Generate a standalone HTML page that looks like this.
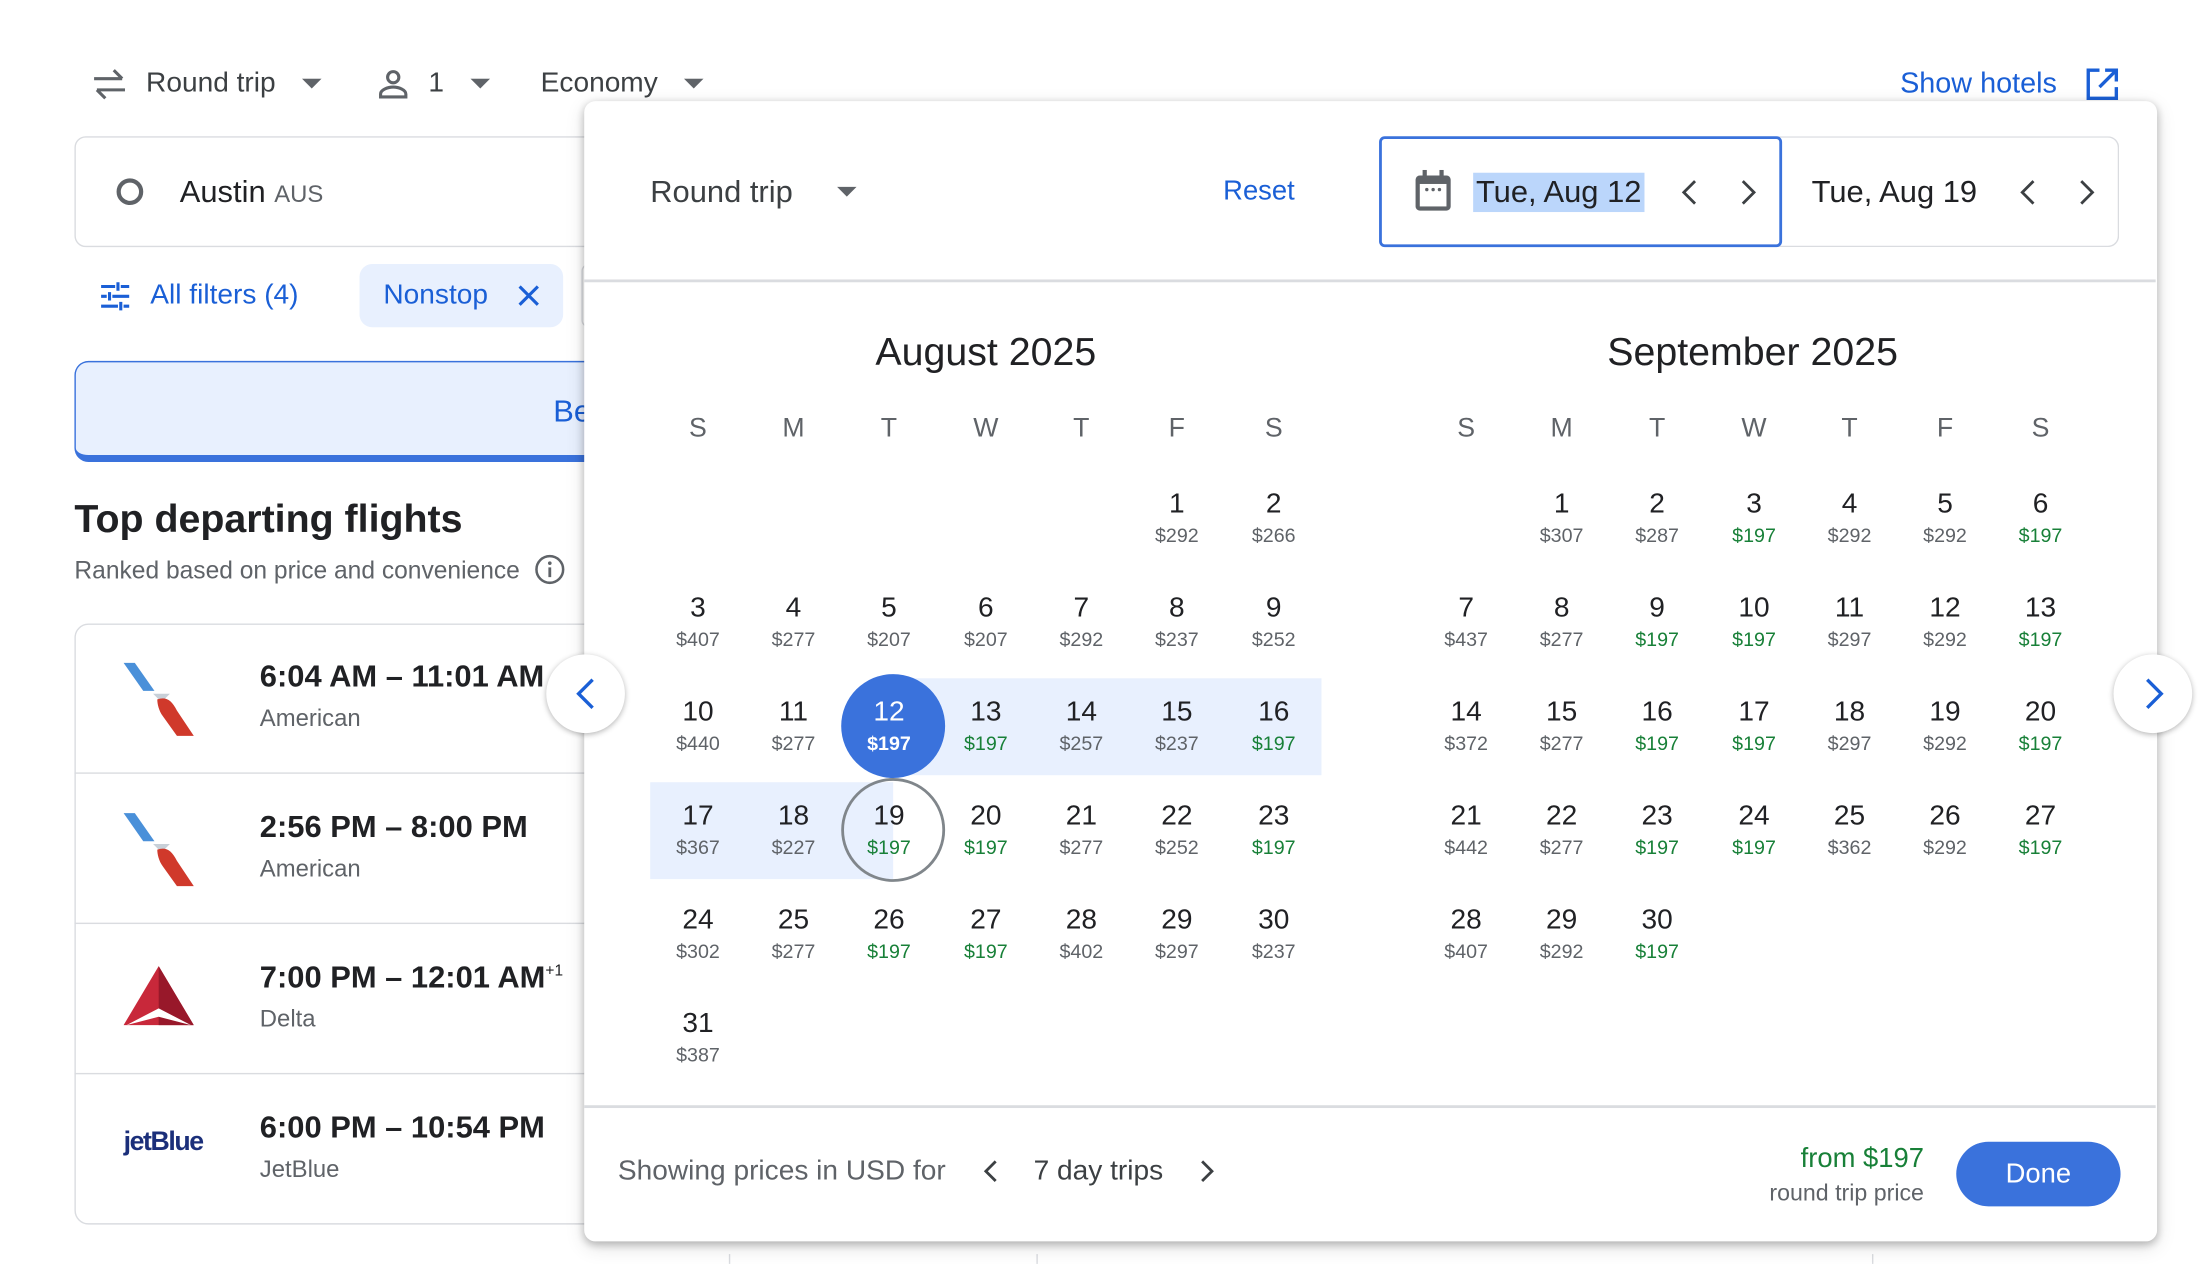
<!DOCTYPE html>
<html><head><meta charset="utf-8"><style>
*{box-sizing:border-box;margin:0;padding:0}
html,body{width:2202px;height:1264px;overflow:hidden;background:#fff}
#w{position:absolute;left:0;top:0;width:1568px;height:900px;transform:scale(1.40434);transform-origin:0 0;font-family:"Liberation Sans",Arial,sans-serif;color:#202124}
.a{position:absolute;white-space:nowrap}
.g{color:#5f6368}
.bl{color:#1a5fd6}
.d{position:absolute;width:64px;margin-left:-32px;text-align:center}
.d b{display:block;font-weight:400;font-size:20px;line-height:24px;color:#202124}
.d i{display:block;font-style:normal;font-size:14px;line-height:18px;margin-top:1px;color:#5f6368}
.d.gr i{color:#188038}
.wd{position:absolute;width:40px;margin-left:-20px;text-align:center;font-size:19px;color:#5f6368;top:295px}
.row{position:absolute;left:53px;width:380px;height:107px;border-bottom:1.5px solid #dadce0}
.tm{position:absolute;left:132px;top:25px;font-size:22px;font-weight:700;color:#202124}
.al{position:absolute;left:132px;top:58px;font-size:17px;color:#5f6368}
</style></head><body><div id="w">

<svg class="a" style="left:64px;top:48px" width="28" height="24" viewBox="0 0 28 24"><path d="M3 8h20M17 2l6 6M25 16H5M11 22l-6-6" stroke="#5f6368" stroke-width="2.2" fill="none"/></svg>
<div class="a" style="left:104px;top:48px;font-size:20px;color:#3c4043">Round trip</div>
<svg class="a" style="left:215px;top:56px" width="14" height="8"><path d="M0 0h14L7 7z" fill="#5f6368"/></svg>
<svg class="a" style="left:268px;top:48px" width="24" height="24" viewBox="0 0 24 24"><circle cx="12" cy="7" r="4" stroke="#5f6368" stroke-width="2.2" fill="none"/><path d="M3 21v-2c0-3 5-5 9-5s9 2 9 5v2z" stroke="#5f6368" stroke-width="2.2" fill="none"/></svg>
<div class="a" style="left:305px;top:48px;font-size:20px;color:#3c4043">1</div>
<svg class="a" style="left:335px;top:56px" width="14" height="8"><path d="M0 0h14L7 7z" fill="#5f6368"/></svg>
<div class="a" style="left:385px;top:48px;font-size:20px;color:#3c4043">Economy</div>
<svg class="a" style="left:487px;top:56px" width="14" height="8"><path d="M0 0h14L7 7z" fill="#5f6368"/></svg>
<div class="a bl" style="left:1353px;top:48px;font-size:20.5px">Show hotels</div>
<svg class="a" style="left:1484px;top:47px" width="26" height="26" viewBox="0 0 26 26"><path d="M11 3H3v20h20v-8M15 3h8v8M23 3L11 15" stroke="#1a5fd6" stroke-width="2.4" fill="none"/></svg>

<div class="a" style="left:53px;top:97px;width:420px;height:79px;border:1.5px solid #dadce0;border-radius:8px"></div>
<div class="a" style="left:83px;top:127px;width:19px;height:19px;border:3.5px solid #5f6368;border-radius:50%"></div>
<div class="a" style="left:128px;top:124px;font-size:22px;color:#202124">Austin <span style="font-size:17px;color:#5f6368">AUS</span></div>
<svg class="a" style="left:71px;top:200px" width="22" height="22" viewBox="0 0 22 22"><path d="M1 4h10M15 4h6M1 11h4M9 11h12M1 18h12M17 18h4M13 1v6M7 8v6M15 15v6" stroke="#1a5fd6" stroke-width="2.2" fill="none"/></svg>
<div class="a bl" style="left:107px;top:199px;font-size:20px">All filters (4)</div>
<div class="a" style="left:256px;top:188px;width:145px;height:45px;background:#e8f0fe;border-radius:9px"></div>
<div class="a bl" style="left:273px;top:199px;font-size:20px">Nonstop</div>
<svg class="a" style="left:368px;top:202px" width="17" height="17"><path d="M2 2l13 13M15 2L2 15" stroke="#1a5fd6" stroke-width="2.2"/></svg>
<div class="a" style="left:414px;top:188px;width:10px;height:45px;border:1.5px solid #dadce0;border-radius:9px"></div>
<div class="a" style="left:53px;top:257px;width:420px;height:72px;background:#e8f0fe;border:1.5px solid #3a72dc;border-bottom:5px solid #3a72dc;border-radius:10px"></div>
<div class="a bl" style="left:394px;top:280px;font-size:22px">Be</div>
<div class="a" style="left:53px;top:354px;font-size:28px;font-weight:700;color:#202124">Top departing flights</div>
<div class="a g" style="left:53px;top:396px;font-size:17.5px">Ranked based on price and convenience</div>
<svg class="a" style="left:380px;top:394px" width="23" height="23"><circle cx="11.5" cy="11.5" r="9.5" stroke="#5f6368" stroke-width="1.8" fill="none"/><path d="M11.5 10v7" stroke="#5f6368" stroke-width="2"/><circle cx="11.5" cy="7" r="1.3" fill="#5f6368"/></svg>

<div class="a" style="left:53px;top:444px;width:400px;height:428px;border:1.5px solid #dadce0;border-radius:10px"></div>
<div class="row" style="top:444px"><svg class="a" style="left:35px;top:26px" width="52" height="56" viewBox="0 0 52 56"><path d="M0 2h8l14 20h-8z" fill="#4a90d9"/><path d="M21 24h12l-6 6z" fill="#c8d0d8"/><path d="M24 28c6-2 10 0 14 8l12 18H38L28 40c-3-4-4-9-4-12z" fill="#d0392b"/></svg><div class="tm">6:04 AM – 11:01 AM</div><div class="al">American</div></div>
<div class="row" style="top:551px"><svg class="a" style="left:35px;top:26px" width="52" height="56" viewBox="0 0 52 56"><path d="M0 2h8l14 20h-8z" fill="#4a90d9"/><path d="M21 24h12l-6 6z" fill="#c8d0d8"/><path d="M24 28c6-2 10 0 14 8l12 18H38L28 40c-3-4-4-9-4-12z" fill="#d0392b"/></svg><div class="tm">2:56 PM – 8:00 PM</div><div class="al">American</div></div>
<div class="row" style="top:658px"><svg class="a" style="left:35px;top:30px" width="50" height="44" viewBox="0 0 50 44"><path d="M25 0L50 42H0z" fill="#c8283a"/><path d="M25 0L50 42H25z" fill="#98182a"/><path d="M2 42L25 30L48 42L25 36z" fill="#fff"/></svg><div class="tm">7:00 PM – 12:01 AM<sup style="font-size:11px;font-weight:400">+1</sup></div><div class="al">Delta</div></div>
<div class="row" style="top:765px;border-bottom:none"><div class="a" style="left:35px;top:38px;font-size:19px;color:#1b2f7a;letter-spacing:-1px;font-weight:700">jetBlue</div><div class="tm">6:00 PM – 10:54 PM</div><div class="al">JetBlue</div></div>

<div class="a" style="left:519px;top:893px;width:1px;height:7px;background:#dadce0"></div>
<div class="a" style="left:738px;top:893px;width:1px;height:7px;background:#dadce0"></div>
<div class="a" style="left:1333px;top:893px;width:1px;height:7px;background:#dadce0"></div>

<div class="a" style="left:416px;top:72px;width:1120px;height:812px;background:#fff;border-radius:8px;box-shadow:0 2px 6px rgba(0,0,0,.25),0 4px 14px rgba(0,0,0,.12)"></div>
<div class="a" style="left:463px;top:124px;font-size:22px;color:#3c4043">Round trip</div>
<svg class="a" style="left:596px;top:133px" width="14" height="8"><path d="M0 0h14L7 7z" fill="#5f6368"/></svg>
<div class="a bl" style="left:871px;top:125px;font-size:19.5px">Reset</div>
<div class="a" style="left:1266px;top:97px;width:243px;height:79px;border:1.5px solid #dadce0;border-left:none;border-radius:0 8px 8px 0"></div>
<div class="a" style="left:982px;top:97px;width:287px;height:79px;border:2.5px solid #3a72dc;border-radius:4px"></div>
<svg class="a" style="left:1007px;top:121px" width="28" height="30" viewBox="0 0 28 30"><rect x="1" y="4" width="25" height="25" rx="3" fill="#5f6368"/><rect x="4" y="10" width="19" height="16" fill="#fff"/><rect x="6" y="0" width="3" height="6" fill="#5f6368"/><rect x="18" y="0" width="3" height="6" fill="#5f6368"/><circle cx="9" cy="14" r="1.2" fill="#5f6368"/><circle cx="13.5" cy="14" r="1.2" fill="#5f6368"/><circle cx="18" cy="14" r="1.2" fill="#5f6368"/></svg>
<div class="a" style="left:1049px;top:123px;font-size:22px;color:#202124;background:#bbd6fb;padding:2px 2px;line-height:24px">Tue, Aug 12</div>
<svg class="a" style="left:1196px;top:127px" width="14" height="20"><path d="M11 2L3 10l8 8" stroke="#3c4043" stroke-width="2" fill="none"/></svg>
<svg class="a" style="left:1238px;top:127px" width="14" height="20"><path d="M3 2l8 8-8 8" stroke="#3c4043" stroke-width="2" fill="none"/></svg>
<div class="a" style="left:1290px;top:124px;font-size:22px;color:#202124">Tue, Aug 19</div>
<svg class="a" style="left:1437px;top:127px" width="14" height="20"><path d="M11 2L3 10l8 8" stroke="#3c4043" stroke-width="2" fill="none"/></svg>
<svg class="a" style="left:1479px;top:127px" width="14" height="20"><path d="M3 2l8 8-8 8" stroke="#3c4043" stroke-width="2" fill="none"/></svg>
<div class="a" style="left:416px;top:199px;width:1119px;height:1.5px;background:#dadce0"></div>

<div class="a" style="left:560px;top:235px;width:284px;text-align:center;font-size:28px;color:#202124">August 2025</div>
<div class="a" style="left:1106px;top:235px;width:284px;text-align:center;font-size:28px;color:#202124">September 2025</div>
<div class="wd" style="left:497px">S</div><div class="wd" style="left:565px">M</div><div class="wd" style="left:633px">T</div><div class="wd" style="left:702px">W</div><div class="wd" style="left:770px">T</div><div class="wd" style="left:838px">F</div><div class="wd" style="left:907px">S</div>
<div class="wd" style="left:1044px">S</div><div class="wd" style="left:1112px">M</div><div class="wd" style="left:1180px">T</div><div class="wd" style="left:1249px">W</div><div class="wd" style="left:1317px">T</div><div class="wd" style="left:1385px">F</div><div class="wd" style="left:1453px">S</div>

<div class="a" style="left:636px;top:483px;width:305px;height:69px;background:#e8f0fe"></div>
<div class="a" style="left:463px;top:557px;width:173px;height:69px;background:#e8f0fe"></div>
<div class="a" style="left:599px;top:480px;width:74px;height:74px;border-radius:50%;background:#3a72dc"></div>
<div class="a" style="left:599px;top:554px;width:74px;height:74px;border-radius:50%;border:2.5px solid #80868b"></div>

<div class="d" style="left:838px;top:347px"><b>1</b><i>$292</i></div>
<div class="d" style="left:907px;top:347px"><b>2</b><i>$266</i></div>
<div class="d" style="left:497px;top:421px"><b>3</b><i>$407</i></div>
<div class="d" style="left:565px;top:421px"><b>4</b><i>$277</i></div>
<div class="d" style="left:633px;top:421px"><b>5</b><i>$207</i></div>
<div class="d" style="left:702px;top:421px"><b>6</b><i>$207</i></div>
<div class="d" style="left:770px;top:421px"><b>7</b><i>$292</i></div>
<div class="d" style="left:838px;top:421px"><b>8</b><i>$237</i></div>
<div class="d" style="left:907px;top:421px"><b>9</b><i>$252</i></div>
<div class="d" style="left:497px;top:495px"><b>10</b><i>$440</i></div>
<div class="d" style="left:565px;top:495px"><b>11</b><i>$277</i></div>
<div class="d" style="left:633px;top:495px"><b style="color:#fff">12</b><i style="color:#fff;font-weight:700">$197</i></div>
<div class="d gr" style="left:702px;top:495px"><b>13</b><i>$197</i></div>
<div class="d" style="left:770px;top:495px"><b>14</b><i>$257</i></div>
<div class="d" style="left:838px;top:495px"><b>15</b><i>$237</i></div>
<div class="d gr" style="left:907px;top:495px"><b>16</b><i>$197</i></div>
<div class="d" style="left:497px;top:569px"><b>17</b><i>$367</i></div>
<div class="d" style="left:565px;top:569px"><b>18</b><i>$227</i></div>
<div class="d gr" style="left:633px;top:569px"><b>19</b><i>$197</i></div>
<div class="d gr" style="left:702px;top:569px"><b>20</b><i>$197</i></div>
<div class="d" style="left:770px;top:569px"><b>21</b><i>$277</i></div>
<div class="d" style="left:838px;top:569px"><b>22</b><i>$252</i></div>
<div class="d gr" style="left:907px;top:569px"><b>23</b><i>$197</i></div>
<div class="d" style="left:497px;top:643px"><b>24</b><i>$302</i></div>
<div class="d" style="left:565px;top:643px"><b>25</b><i>$277</i></div>
<div class="d gr" style="left:633px;top:643px"><b>26</b><i>$197</i></div>
<div class="d gr" style="left:702px;top:643px"><b>27</b><i>$197</i></div>
<div class="d" style="left:770px;top:643px"><b>28</b><i>$402</i></div>
<div class="d" style="left:838px;top:643px"><b>29</b><i>$297</i></div>
<div class="d" style="left:907px;top:643px"><b>30</b><i>$237</i></div>
<div class="d" style="left:497px;top:717px"><b>31</b><i>$387</i></div>

<div class="d" style="left:1112px;top:347px"><b>1</b><i>$307</i></div>
<div class="d" style="left:1180px;top:347px"><b>2</b><i>$287</i></div>
<div class="d gr" style="left:1249px;top:347px"><b>3</b><i>$197</i></div>
<div class="d" style="left:1317px;top:347px"><b>4</b><i>$292</i></div>
<div class="d" style="left:1385px;top:347px"><b>5</b><i>$292</i></div>
<div class="d gr" style="left:1453px;top:347px"><b>6</b><i>$197</i></div>
<div class="d" style="left:1044px;top:421px"><b>7</b><i>$437</i></div>
<div class="d" style="left:1112px;top:421px"><b>8</b><i>$277</i></div>
<div class="d gr" style="left:1180px;top:421px"><b>9</b><i>$197</i></div>
<div class="d gr" style="left:1249px;top:421px"><b>10</b><i>$197</i></div>
<div class="d" style="left:1317px;top:421px"><b>11</b><i>$297</i></div>
<div class="d" style="left:1385px;top:421px"><b>12</b><i>$292</i></div>
<div class="d gr" style="left:1453px;top:421px"><b>13</b><i>$197</i></div>
<div class="d" style="left:1044px;top:495px"><b>14</b><i>$372</i></div>
<div class="d" style="left:1112px;top:495px"><b>15</b><i>$277</i></div>
<div class="d gr" style="left:1180px;top:495px"><b>16</b><i>$197</i></div>
<div class="d gr" style="left:1249px;top:495px"><b>17</b><i>$197</i></div>
<div class="d" style="left:1317px;top:495px"><b>18</b><i>$297</i></div>
<div class="d" style="left:1385px;top:495px"><b>19</b><i>$292</i></div>
<div class="d gr" style="left:1453px;top:495px"><b>20</b><i>$197</i></div>
<div class="d" style="left:1044px;top:569px"><b>21</b><i>$442</i></div>
<div class="d" style="left:1112px;top:569px"><b>22</b><i>$277</i></div>
<div class="d gr" style="left:1180px;top:569px"><b>23</b><i>$197</i></div>
<div class="d gr" style="left:1249px;top:569px"><b>24</b><i>$197</i></div>
<div class="d" style="left:1317px;top:569px"><b>25</b><i>$362</i></div>
<div class="d" style="left:1385px;top:569px"><b>26</b><i>$292</i></div>
<div class="d gr" style="left:1453px;top:569px"><b>27</b><i>$197</i></div>
<div class="d" style="left:1044px;top:643px"><b>28</b><i>$407</i></div>
<div class="d" style="left:1112px;top:643px"><b>29</b><i>$292</i></div>
<div class="d gr" style="left:1180px;top:643px"><b>30</b><i>$197</i></div>

<div class="a" style="left:389px;top:466px;width:56px;height:56px;border-radius:50%;background:#fff;box-shadow:0 1px 4px rgba(0,0,0,.3)"></div>
<svg class="a" style="left:409px;top:482px" width="16" height="24"><path d="M13 2L3 12l10 10" stroke="#1a5fd6" stroke-width="2.4" fill="none"/></svg>
<div class="a" style="left:1505px;top:466px;width:56px;height:56px;border-radius:50%;background:#fff;box-shadow:0 1px 4px rgba(0,0,0,.3)"></div>
<svg class="a" style="left:1526px;top:482px" width="16" height="24"><path d="M3 2l10 10-10 10" stroke="#1a5fd6" stroke-width="2.4" fill="none"/></svg>

<div class="a" style="left:416px;top:787px;width:1119px;height:1.5px;background:#dadce0"></div>
<div class="a g" style="left:440px;top:823px;font-size:20px">Showing prices in USD for</div>
<svg class="a" style="left:699px;top:825px" width="12" height="18"><path d="M10 2L3 9l7 7" stroke="#3c4043" stroke-width="2" fill="none"/></svg>
<div class="a" style="left:736px;top:823px;font-size:20px;color:#3c4043">7 day trips</div>
<svg class="a" style="left:854px;top:825px" width="12" height="18"><path d="M2 2l7 7-7 7" stroke="#3c4043" stroke-width="2" fill="none"/></svg>
<div class="a" style="left:1170px;top:814px;width:200px;text-align:right;font-size:19.5px;color:#188038">from $197</div>
<div class="a g" style="left:1170px;top:841px;width:200px;text-align:right;font-size:16.5px">round trip price</div>
<div class="a" style="left:1393px;top:813px;width:117px;height:46px;border-radius:23px;background:#3a72dc;color:#fff;font-size:19.5px;text-align:center;line-height:46px">Done</div>

</div></body></html>
